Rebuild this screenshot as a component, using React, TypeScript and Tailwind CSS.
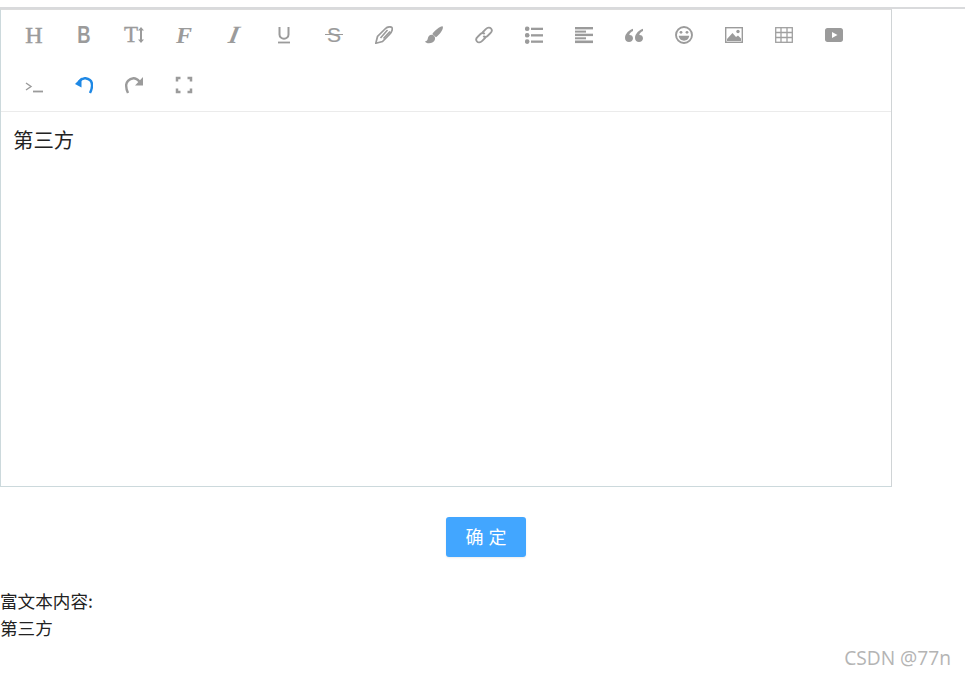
import React from "react";

const G = "#9b9b9b";
const cjk = { fontFamily: '"Noto Sans CJK SC", "Noto Sans", sans-serif' };

function Svg({ children, color = G }: { children: React.ReactNode; color?: string }) {
  return (
    <svg width="18" height="18" viewBox="0 0 18 18" fill="none" stroke={color} strokeWidth="1.5" strokeLinecap="butt" strokeLinejoin="miter">
      {children}
    </svg>
  );
}

function Letter({ ch, cls }: { ch: string; cls: string }) {
  return <span className={`block w-[18px] text-center leading-[18px] text-[#9b9b9b] ${cls}`}>{ch}</span>;
}

const icons: React.ReactNode[] = [
  <Letter ch="H" cls="text-[24px] font-['Liberation_Serif',serif] [-webkit-text-stroke:0.5px_#9b9b9b]" />,
  <Letter ch="B" cls="text-[23px] font-['Liberation_Sans',sans-serif] font-bold scale-x-[0.8]" />,
  <span className="flex h-[18px] w-[18px] items-center">
    <span className="-ml-px w-[13px] shrink-0 text-center font-['Liberation_Serif',serif] text-[23px] leading-[18px] text-[#9b9b9b] [-webkit-text-stroke:0.4px_#9b9b9b]">T</span>
    <svg className="ml-px shrink-0" width="6" height="16" viewBox="0 0 6 16" fill={G}><path d="M3 0 6 3.500H4v9H6L3 16 0 12.500H2v-9H0z" /></svg>
  </span>,
  <Letter ch="F" cls="text-[24px] italic font-['Liberation_Serif',serif] font-bold" />,
  <Letter ch="I" cls="text-[25px] italic font-['Liberation_Serif',serif] font-bold -skew-x-12" />,
  <Svg>
    <path d="M4.500 1V8.500C4.500 14 13.500 14 13.500 8.500V1" strokeWidth="2" />
    <path d="M3 16.500H15" strokeWidth="1.800" />
  </Svg>,
  <span className="relative block h-[18px] w-[18px]">
    <Letter ch="S" cls="text-[21px] font-['Liberation_Sans',sans-serif] [-webkit-text-stroke:0.2px_#9b9b9b]" />
    <span className="absolute left-0 right-0 top-[8px] h-px bg-[#9b9b9b]" />
  </span>,
  <Svg>
    <path d="M0.800 17.200 2.500 10.500 10.500 2.500C12.500 0.500 17 0 17.300 2.500 17.500 5 16 6.800 14.500 8.300L7.500 15.500Z" strokeWidth="1.700" />
    <path d="M5.500 12 12.500 4M8.500 12.500 15 5.500" strokeWidth="1.600" />
  </Svg>,
  <svg width="18" height="18" viewBox="0 0 18 18" fill={G}>
    <path d="M17.500 0.300C18.400 1 17.800 3 16.500 5.300 15.200 7.500 13 10 11 11.200L7.300 8C8.500 6 12 3 13.700 1.800 15.300 0.700 16.900-0.200 17.500 0.300Z" />
    <path d="M6.500 8.800C8.800 8.800 10.500 10.800 10 13.200 9.500 15.800 6.800 17.300 3.900 17.300 2 17.300 0.600 16.500 0 15.500 2 15.200 2.500 14 2.800 12.500 3.100 10.300 4.800 8.800 6.500 8.800Z" />
  </svg>,
  <Svg>
    <path d="M7.500 6.500 11 3C12.500 1.300 15 1.300 16 2.500 17 3.700 17 5.700 15.500 7L12.500 10C11 11.300 9.300 11 8.300 10" strokeWidth="1.800" />
    <path d="M10.500 11.500 7 15C5.500 16.700 3 16.700 2 15.500 1 14.300 1 12.300 2.500 11L5.500 8C7 6.700 8.700 7 9.700 8" strokeWidth="1.800" />
  </Svg>,
  <svg width="18" height="18" viewBox="0 0 18 18" fill={G}>
    <circle cx="2.200" cy="2.800" r="2.300" /><circle cx="2.200" cy="9.300" r="2.300" /><circle cx="2.200" cy="15.600" r="2.300" />
    <rect x="6" y="1.700" width="12" height="2.300" /><rect x="6" y="8.200" width="12" height="2.300" /><rect x="6" y="14.500" width="12" height="2.300" />
  </svg>,
  <svg width="18" height="18" viewBox="0 0 18 18" fill={G}>
    <rect x="0" y="1" width="18" height="2.400" /><rect x="0" y="4.600" width="11" height="2" /><rect x="0" y="7.700" width="18" height="2.400" /><rect x="0" y="11.300" width="11" height="2" /><rect x="0" y="14.500" width="18" height="2.600" />
  </svg>,
  <svg width="18" height="18" viewBox="0 0 18 18" fill={G}>
    <path d="M8 2.800C4.500 4 0 7.500 0 12 0 14.800 1.800 16 4 16 6.300 16 8 14.500 8 12.300 8 10 6.300 8.800 4.300 9 4.500 7.300 6 6 8 5Z" />
    <path d="M18 2.800C14.500 4 10 7.500 10 12 10 14.800 11.800 16 14 16 16.300 16 18 14.500 18 12.300 18 10 16.300 8.800 14.300 9 14.500 7.300 16 6 18 5Z" />
  </svg>,
  <Svg>
    <circle cx="9" cy="9" r="8" strokeWidth="1.900" />
    <circle cx="6" cy="6.300" r="1.400" fill={G} stroke="none" />
    <circle cx="12" cy="6.300" r="1.400" fill={G} stroke="none" />
    <path d="M3.800 9.800H14.200C14 13 11.500 14.700 9 14.700 6.500 14.700 4 13 3.800 9.800Z" fill={G} stroke="none" />
  </Svg>,
  <svg width="18" height="18" viewBox="0 0 18 18" fill="none">
    <rect x="0.700" y="1.700" width="16.600" height="14.600" stroke={G} strokeWidth="1.400" />
    <path d="M2 15V13L7.500 7 11 11 13 9.500 16 12.500V15Z" fill={G} />
    <circle cx="13" cy="5.500" r="1.700" fill={G} />
  </svg>,
  <svg width="18" height="18" viewBox="0 0 18 18" fill="none" stroke="#a0a0a0" strokeWidth="1.300">
    <rect x="0.700" y="1.700" width="16.600" height="14.600" />
    <path d="M6 1.500V16.500M12 1.500V16.500M0.500 6.500H17.500M0.500 11.500H17.500" />
  </svg>,
  <svg width="18" height="18" viewBox="0 0 18 18" fill={G}>
    <path fillRule="evenodd" d="M2.500 2H15.500C17 2 18 3 18 4.500V13.500C18 15 17 16 15.500 16H2.500C1 16 0 15 0 13.500V4.500C0 3 1 2 2.500 2ZM7 6V12L12.500 9Z" />
  </svg>,
  <Svg>
    <path d="M1 7 6 10.500 1 14" strokeWidth="1.400" />
    <path d="M8 15.500H18" strokeWidth="1.800" />
  </Svg>,
  <Svg color="#1e88e5">
    <path d="M4 5.500C6 3.300 8.500 2 10.500 2.300 15 3 17.300 6 17 10 17 12.500 16 15 15 17" strokeWidth="2.400" />
    <path d="M0 8 6.500 1.500V11.500Z" fill="#1e88e5" stroke="none" />
  </Svg>,
  <Svg>
    <path d="M14.500 5.500C12.500 3.300 10.500 2 8.500 2.200 4 2.800 0.800 6 1.200 10 1.200 12.500 2 15 3 17" strokeWidth="2.400" />
    <path d="M18 1V9.500H10Z" fill={G} stroke="none" />
  </Svg>,
  <Svg>
    <path d="M2 5.500V2H5.500M12.500 2H16V5.500M16 12.500V16H12.500M5.500 16H2V12.500" strokeWidth="2.500" />
  </Svg>,
];

export default function App() {
  return (
    <div className="relative h-[676px] w-[965px] overflow-hidden bg-white pt-[7px] text-[#222]" style={cjk}>
      <div className="h-[2px] bg-[#d9dadc]" />
      <div className="flex h-[478px] w-[892px] flex-col border border-[#ccd9dc] border-t-[#dcdcdc] border-r-[#d0d4d6]">
        <div className="flex flex-wrap border-b border-[#ebebeb] pb-px pl-2">
          {icons.map((ic, i) => (
            <div key={i} className="flex h-[50px] w-[50px] items-center justify-center">
              {ic}
            </div>
          ))}
        </div>
        <div className="px-3 pt-3 text-[20.4px] leading-[30px]">第三方</div>
      </div>
      <button className="ml-[446px] mt-[30px] block h-10 w-20 rounded-[3px] bg-[#42a6ff] pb-0.5 pl-[5px] text-[18px] tracking-[5px] text-white shadow-[0_1px_2px_rgba(0,0,0,0.08)]">
        确定
      </button>
      <div className="mt-[30px] text-[17.6px] leading-[27px]">
        <div>富文本内容:</div>
        <div>第三方</div>
      </div>
      <div className="absolute right-[14px] top-[645px] font-['Open_Sans',sans-serif] text-[19.2px] leading-[26px] text-[#b4b4b4]">
        CSDN @77n
      </div>
    </div>
  );
}
